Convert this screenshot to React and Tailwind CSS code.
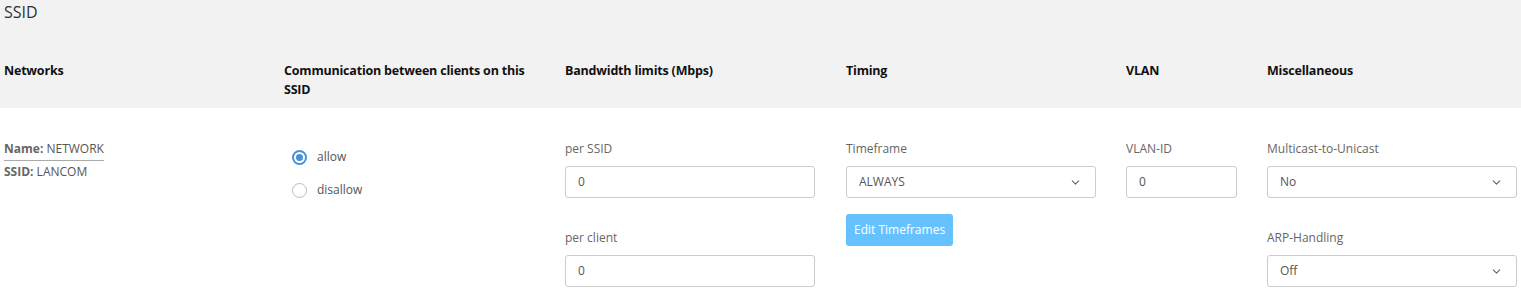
import { ChevronDown } from "lucide-react";

const Label = ({ children }) => (
  <div className="text-[12px] text-[#666] leading-4 mb-[9px]">{children}</div>
);

const TextBox = ({ value, width }) => (
  <div
    className={`${width} h-[32px] border border-[#ccc] rounded-[3px] bg-white flex items-center px-3 text-[12px] text-[#555]`}
  >
    {value}
  </div>
);

const Select = ({ value }) => (
  <div className="w-[250px] h-[32px] border border-[#ccc] rounded-[3px] bg-white flex items-center justify-between pl-3 pr-[13px] text-[12px] text-[#555]">
    <span>{value}</span>
    <ChevronDown className="w-[13px] h-[13px] text-[#666]" strokeWidth={2} />
  </div>
);

const Radio = ({ checked, label }) => (
  <div className="flex items-center gap-[10px] h-[16px]">
    {checked ? (
      <span className="w-[15px] h-[15px] rounded-full border-[2px] border-[#4a90d9] flex items-center justify-center">
        <span className="w-[7px] h-[7px] rounded-full bg-[#4a90d9]" />
      </span>
    ) : (
      <span className="w-[15px] h-[15px] rounded-full border border-[#bbb] bg-white" />
    )}
    <span className="text-[12px] text-[#555]">{label}</span>
  </div>
);

export default function App() {
  return (
    <div className="w-[1521px] h-[289px] bg-white font-['Open_Sans',sans-serif] overflow-hidden">
      <div className="bg-[#f2f2f2] h-[108px] pl-1">
        <div className="text-[16px] text-[#333] pt-[1px] leading-[22px]">SSID</div>
        <div className="grid grid-cols-[280px_281px_281px_280px_141px_1fr] mt-[38px] text-[12.5px] font-bold text-[#111] leading-[19px] tracking-[-0.2px]">
          <div>Networks</div>
          <div className="pr-5">Communication between clients on this SSID</div>
          <div>Bandwidth limits (Mbps)</div>
          <div>Timing</div>
          <div>VLAN</div>
          <div>Miscellaneous</div>
        </div>
      </div>

      <div className="grid grid-cols-[280px_281px_281px_280px_141px_1fr] pl-1 pt-[24px]">
        <div className="pt-[8px] text-[12px] text-[#555]">
          <div className="inline-block border-b border-[#aaa] pb-[3px] leading-4">
            <span className="font-bold text-[#666]">Name:</span> NETWORK
          </div>
          <div className="pt-[3px] leading-4">
            <span className="font-bold text-[#666]">SSID:</span> LANCOM
          </div>
        </div>

        <div className="pt-[17px] pl-2 flex flex-col gap-[17px]">
          <Radio checked label="allow" />
          <Radio label="disallow" />
        </div>

        <div className="pt-[9px]">
          <Label>per SSID</Label>
          <TextBox value="0" width="w-[250px]" />
          <div className="h-[32px]" />
          <Label>per client</Label>
          <TextBox value="0" width="w-[250px]" />
        </div>

        <div className="pt-[9px]">
          <Label>Timeframe</Label>
          <Select value="ALWAYS" />
          <button className="mt-[16px] h-[32px] px-[8px] rounded-[3px] bg-[#66c2ff] text-white text-[12px]">
            Edit Timeframes
          </button>
        </div>

        <div className="pt-[9px]">
          <Label>VLAN-ID</Label>
          <TextBox value="0" width="w-[111px]" />
        </div>

        <div className="pt-[9px]">
          <Label>Multicast-to-Unicast</Label>
          <Select value="No" />
          <div className="h-[32px]" />
          <Label>ARP-Handling</Label>
          <Select value="Off" />
        </div>
      </div>
    </div>
  );
}
